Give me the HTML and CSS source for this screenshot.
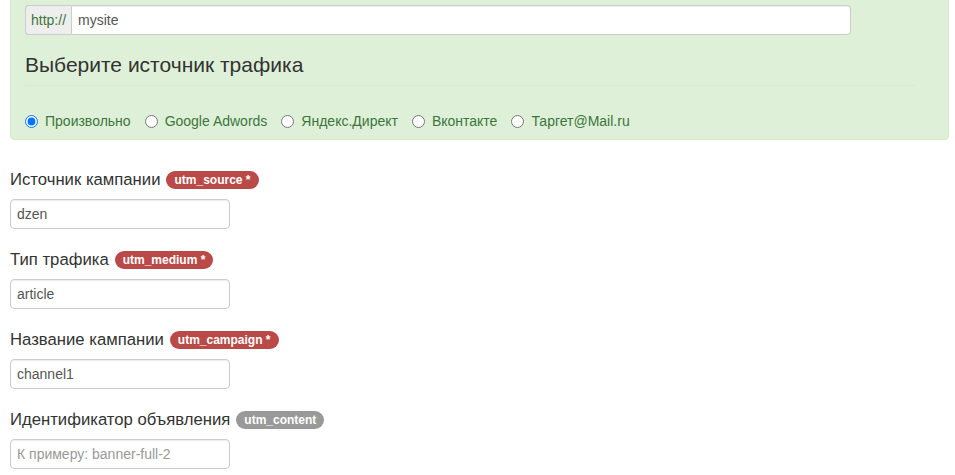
FILE: index.html
```html
<!DOCTYPE html>
<html lang="ru">
<head>
<meta charset="utf-8">
<link rel="stylesheet" href="styles.css">
</head>
<body>
<div class="page">
  <div class="panel">
    <div class="input-group">
      <span class="addon">http://</span>
      <input class="field" type="text" value="mysite">
    </div>
    <h3 class="heading">Выберите источник трафика</h3>
    <hr class="divider">
    <div class="radios">
      <label class="radio"><input type="radio" name="src" checked><span>Произвольно</span></label>
      <label class="radio"><input type="radio" name="src"><span>Google Adwords</span></label>
      <label class="radio"><input type="radio" name="src"><span>Яндекс.Директ</span></label>
      <label class="radio"><input type="radio" name="src"><span>Вконтакте</span></label>
      <label class="radio"><input type="radio" name="src"><span>Таргет@Mail.ru</span></label>
    </div>
  </div>

  <div class="form">
    <div class="group">
      <div class="label">Источник кампании <span class="badge red">utm_source *</span></div>
      <input class="small-input" type="text" value="dzen">
    </div>
    <div class="group">
      <div class="label">Тип трафика <span class="badge red">utm_medium *</span></div>
      <input class="small-input" type="text" value="article">
    </div>
    <div class="group">
      <div class="label">Название кампании <span class="badge red">utm_campaign *</span></div>
      <input class="small-input" type="text" value="channel1">
    </div>
    <div class="group">
      <div class="label">Идентификатор объявления <span class="badge gray">utm_content</span></div>
      <input class="small-input" type="text" placeholder="К примеру: banner-full-2">
    </div>
  </div>
</div>
</body>
</html>
```
FILE: styles.css
```css
html, body {
  margin: 0;
  padding: 0;
  background: #fff;
  overflow: hidden;
}
body {
  font-family: "Liberation Sans", Arial, sans-serif;
  font-size: 14px;
  color: #333;
}
.page {
  padding: 0 6px 0 10px;
}
.panel {
  margin-top: -11px;
  background: #dff0d8;
  border: 1px solid #d6e9c6;
  border-radius: 4px;
  padding: 15px 15px 8px 14px;
}
.input-group {
  display: flex;
  width: 826px;
  height: 30px;
  box-sizing: border-box;
}
.addon {
  display: flex;
  align-items: center;
  padding: 0 5px 0 5px;
  background: #eee;
  border: 1px solid #ccc;
  border-right: none;
  border-radius: 4px 0 0 4px;
  color: #3c763d;
  font-size: 14px;
}
.field {
  flex: 1;
  height: 30px;
  box-sizing: border-box;
  border: 1px solid #ccc;
  border-radius: 0 4px 4px 0;
  padding: 0 6px;
  font: 14px "Liberation Sans", Arial, sans-serif;
  color: #555;
  outline: none;
  box-shadow: inset 0 1px 1px rgba(0,0,0,.075);
}
.heading {
  margin: 19px 0 0 0;
  font-size: 21px;
  font-weight: normal;
  line-height: 22px;
  color: #333;
}
.divider {
  width: 890px;
  margin: 9px 0 0 0;
  border: 0;
  border-top: 1px solid #d8ebcf;
  height: 0;
}
.radios {
  display: flex;
  margin-top: 25px;
  height: 20px;
  align-items: center;
  gap: 14px;
}
.radio {
  display: flex;
  align-items: center;
  color: #3c763d;
  font-size: 14px;
  line-height: 20px;
}
.radio input {
  margin: 0 7px 0 0;
  width: 13px;
  height: 13px;
}
.form {
  padding-top: 30px;
}
.group {
  margin-bottom: 21px;
}
.label {
  display: flex;
  align-items: center;
  gap: 6px;
  font-size: 16.7px;
  line-height: 20px;
  height: 20px;
  margin-bottom: 9px;
  color: #333;
}
.badge {
  display: inline-block;
  font-size: 12px;
  font-weight: bold;
  color: #fff;
  line-height: 18px;
  height: 18px;
  padding: 0 8px;
  border-radius: 9px;
}
.red {
  background: #b94a48;
}
.gray {
  background: #999;
}
.small-input {
  display: block;
  width: 220px;
  height: 30px;
  box-sizing: border-box;
  border: 1px solid #ccc;
  border-radius: 4px;
  padding: 0 6px;
  font: 14px "Liberation Sans", Arial, sans-serif;
  color: #555;
  outline: none;
  box-shadow: inset 0 1px 1px rgba(0,0,0,.075);
}
.small-input::placeholder {
  color: #999;
}
```
